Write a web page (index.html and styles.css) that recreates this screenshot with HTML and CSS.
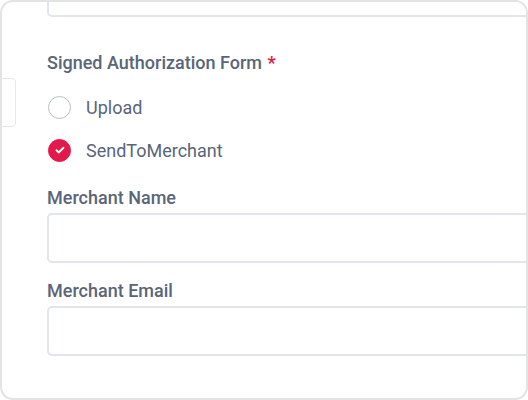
FILE: index.html
```html
<!DOCTYPE html>
<html>
<head>
<meta charset="utf-8">
<link rel="stylesheet" href="styles.css">
</head>
<body>
<div class="stub"></div>
<div class="card">
  <div class="input input-top"></div>
  <div class="group-label">Signed Authorization Form <span class="req">*</span></div>
  <div class="radios">
    <div class="radio-row">
      <span class="radio"></span>
      <span class="radio-text">Upload</span>
    </div>
    <div class="radio-row">
      <span class="radio checked">
        <svg viewBox="0 0 24 24" width="12" height="12"><path d="M5 12.5l4.5 4.5L19 7.5" fill="none" stroke="#fff" stroke-width="3.6" stroke-linecap="round" stroke-linejoin="round"/></svg>
      </span>
      <span class="radio-text">SendToMerchant</span>
    </div>
  </div>
  <div class="field">
    <div class="field-label">Merchant Name</div>
    <div class="input"></div>
  </div>
  <div class="field">
    <div class="field-label">Merchant Email</div>
    <div class="input"></div>
  </div>
</div>
</body>
</html>
```
FILE: styles.css
```css
html, body {
  margin: 0;
  padding: 0;
  background: #fff;
}
body {
  width: 528px;
  height: 400px;
  position: relative;
  font-family: Roboto, "Liberation Sans", sans-serif;
}
.card {
  box-sizing: border-box;
  width: 528px;
  height: 400px;
  border: 2px solid #e3e3e3;
  border-radius: 13px;
  overflow: hidden;
  padding-left: 45px;
  background: transparent;
}
.stub {
  position: absolute;
  left: -6px;
  top: 78px;
  width: 20px;
  height: 47px;
  border: 1.5px solid #e4e7ec;
  border-radius: 4px;
}
.input {
  box-sizing: border-box;
  height: 50px;
  margin-right: -40px;
  border: 2px solid #e2e6ec;
  border-radius: 5px;
  background: #fff;
}
.input-top {
  margin-top: -35px;
}
.group-label {
  margin-top: 36px;
  font-size: 18px;
  line-height: 20px;
  font-weight: 500;
  color: #5a6577;
}
.req {
  color: #e4194b;
  font-weight: 700;
  margin-left: 1px;
}
.radios {
  margin-top: 23px;
  display: flex;
  flex-direction: column;
  gap: 21px;
}
.radio-row {
  display: flex;
  align-items: center;
  height: 22px;
}
.radio {
  box-sizing: border-box;
  width: 23px;
  height: 23px;
  border-radius: 50%;
  border: 1.5px solid #b9bdc3;
  display: flex;
  align-items: center;
  justify-content: center;
  margin-left: 1px;
}
.radio.checked {
  background: #e4194b;
  border-color: #e4194b;
}
.radio-text {
  margin-left: 15px;
  font-size: 18px;
  color: #5a6577;
}
.field {
  margin-top: 27px;
}
.field + .field {
  margin-top: 18px;
}
.field-label {
  font-size: 18px;
  line-height: 20px;
  font-weight: 500;
  color: #5a6577;
  margin-bottom: 5px;
}
```
